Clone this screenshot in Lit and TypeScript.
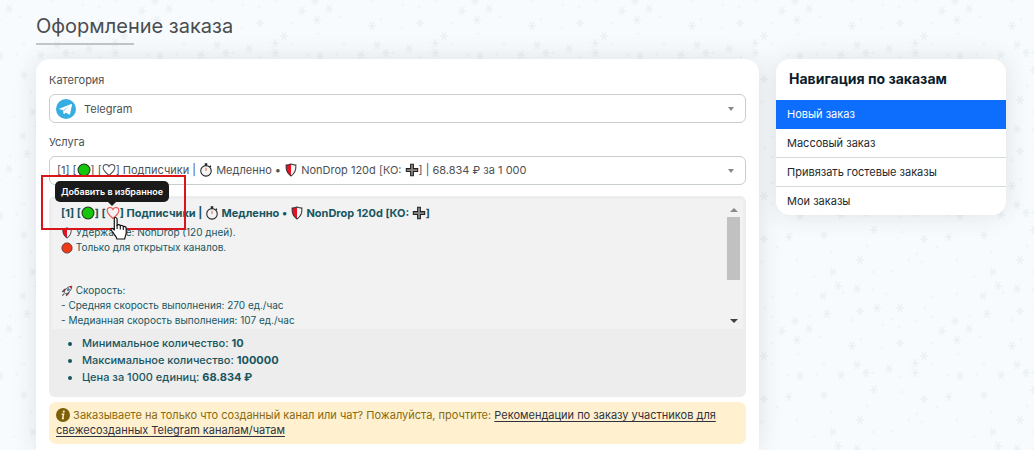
import { LitElement, html, css, svg } from "lit";
import { customElement, property, state } from "lit/decorators.js";

const BIG_FLAKES = [
  [29, 17], [64, 15], [114, 10], [4, 19], [100, 40], [73, 52], [78, 66], [63, 76], [97, 69],
  [67, 94], [100, 91], [117, 88], [140, 88], [35, 101], [22, 111], [49, 109], [37, 120],
  [92, 126], [140, 123], [4, 136], [97, 145], [129, 149], [106, 153], [155, 143],
  [155, 153], [40, 156], [81, 155],
];
const SMALL_FLAKES = [
  [142, 12], [107, 26], [17, 27], [71, 32], [37, 40], [149, 40], [157, 34], [2, 42], [113, 52],
  [132, 51], [54, 57], [113, 70], [126, 74], [37, 74], [83, 73], [13, 77], [92, 100], [123, 105],
  [139, 107], [132, 99], [157, 101], [12, 97], [50, 96], [60, 117], [101, 119], [122, 128],
  [12, 123], [38, 134], [12, 144], [64, 144], [28, 155], [57, 154], [113, 153], [141, 157], [5, 88],
];

@customElement("snow-backdrop")
export class SnowBackdrop extends LitElement {
  static styles = css`
    :host { display: block; }
    .sky { display: block; width: 100%; height: 100%; }
  `;
  render() {
    return html`<svg class="sky" aria-hidden="true">
      <defs>
        <pattern id="snow" x="120" y="60" width="160" height="160" patternUnits="userSpaceOnUse">
          ${BIG_FLAKES.map(
            ([x, y]) => svg`<path d="M${x - 4} ${y}h8M${x - 2} ${y - 4}l4 8M${x + 2} ${y - 4}l-4 8" stroke="#ebf2f6" stroke-width="1.5" fill="none"/>`
          )}
          ${SMALL_FLAKES.map(
            ([x, y]) => svg`<circle cx=${x} cy=${y} r="1.6" fill="#eff5f8"/>`
          )}
        </pattern>
      </defs>
      <rect width="100%" height="100%" fill="#f8fbfd" />
      <rect width="100%" height="100%" fill="url(#snow)" />
    </svg>`;
  }
}

const GLYPHS: Record<string, unknown> = {
  green: svg`<circle cx="8" cy="8" r="6.8" fill="#16c60c" stroke="#1d3a1b" stroke-width="1.2"/>`,
  red: svg`<circle cx="8" cy="8" r="6.8" fill="#f03a17" stroke="#5b3a35" stroke-width="1.2"/>`,
  heart: svg`<path d="M8 14.2C5.200 11.800 1.300 8.900 1.300 5.500c0-2.200 1.500-3.700 3.400-3.700C6.200 1.800 7.400 2.700 8 4c.6-1.300 1.800-2.200 3.300-2.200 1.900 0 3.400 1.500 3.400 3.700 0 3.400-3.900 6.300-6.700 8.700z" fill="none" stroke="currentColor" stroke-width="1.200"/>`,
  watch: svg`<path d="M6.500 1.200h3M8 1.200v2M12.300 3.200l1.200 1.200" stroke="#222" stroke-width="1.800"/><circle cx="8" cy="9" r="6" fill="#f4f4f4" stroke="#222" stroke-width="1.200"/><path d="M8 9V5.500" stroke="#d8453a" stroke-width="1"/>`,
  shield: svg`<path d="M8 1.200c2 .9 3.800 1.200 5.600 1.200.3 5.600-1.400 9.800-5.600 12.400C3.800 12.200 2.100 8 2.400 2.400 4.200 2.400 6 2.100 8 1.200z" fill="#f5f5f5"/><path d="M8 1.200v13.600C3.800 12.200 2.100 8 2.400 2.400 4.200 2.400 6 2.100 8 1.200z" fill="#e81224"/><path d="M8 1.200c2 .9 3.800 1.200 5.600 1.200.3 5.600-1.400 9.800-5.600 12.400C3.800 12.200 2.100 8 2.400 2.400 4.200 2.400 6 2.100 8 1.200z" fill="none" stroke="#333" stroke-width="1.200"/>`,
  plus: svg`<path d="M6.400 1.500h3.200v4.900h4.900v3.200H9.600v4.900H6.400V9.600H1.500V6.400h4.900z" fill="#8a8a8a" stroke="#222" stroke-width="1.200"/>`,
  rocket: svg`<path d="M4 8.500L1.500 9l2.700-3.300L7 5.300zM7.600 12L7 14.500l3.300-2.700.4-2.800z" fill="#e81224" stroke="#333" stroke-width=".8"/><path d="M4 9.500C5.500 5.500 9 1.800 14.500 1.500 14.200 7 10.500 10.500 6.500 12z" fill="#e9eef0" stroke="#333" stroke-width="1"/><path d="M11 2.300c1-.5 2.200-.8 3.500-.8 0 1.300-.3 2.500-.8 3.500z" fill="#e81224"/><circle cx="9.800" cy="6.200" r="1.400" fill="#3a96dd" stroke="#333" stroke-width=".7"/><path d="M4.500 11.500L1.800 14.200" stroke="#555" stroke-width="1.500"/>`,
};

@customElement("inline-glyph")
export class InlineGlyph extends LitElement {
  @property() name = "";
  static styles = css`
    :host { display: inline-block; width: 14px; height: 14px; vertical-align: -3px; }
    .glyph { display: block; width: 100%; height: 100%; }
  `;
  render() {
    return html`<svg class="glyph" viewBox="0 0 16 16" aria-hidden="true">${GLYPHS[this.name]}</svg>`;
  }
}

@customElement("order-nav")
export class OrderNav extends LitElement {
  @state() private active = 0;
  private items = ["Новый заказ", "Массовый заказ", "Привязать гостевые заказы", "Мои заказы"];
  static styles = css`
    :host { display: block; background: #fff; border-radius: 14px; overflow: hidden; box-shadow: 0 0 24px rgba(40, 50, 60, 0.12); }
    .title { margin: 0; padding: 10px 13px 11px; font-size: 14px; line-height: 20px; font-weight: 700; color: #0b1c2c; }
    .link { display: block; padding: 0 11px; font-size: 11px; line-height: 28px; border-bottom: 1px solid #d5dadd; color: #23292e; text-decoration: none; }
    .link:last-child { border-bottom: 0; }
    .active { background: #0d6efd; border-color: #0d6efd; color: #fff; }
  `;
  render() {
    return html`<h2 class="title">Навигация по заказам</h2>
      <nav>
        ${this.items.map(
          (t, i) => html`<a class="link ${i === this.active ? "active" : ""}" href="#" @click=${(e: Event) => { e.preventDefault(); this.active = i; }}>${t}</a>`
        )}
      </nav>`;
  }
}

@customElement("app-root")
export class AppRoot extends LitElement {
  static styles = css`
    :host { display: block; position: relative; min-height: 100vh; box-sizing: border-box; overflow: hidden; font-family: Inter, "Noto Sans", sans-serif; font-size: 11px; color: #4d5154; }
    * { box-sizing: border-box; }
    .backdrop { position: absolute; inset: 0; }
    .page { position: relative; display: flex; flex-direction: column; min-height: 100vh; padding: 14px 28px 0 36px; }
    .heading { margin: 0; font-size: 20px; line-height: 24px; font-weight: 400; color: #4a4d50; }
    .rule { width: 98px; height: 2px; margin: 5px 0 14px; background: #c3c7ca; }
    .columns { flex: 1; display: grid; grid-template-columns: minmax(0, 1fr) 230px; gap: 17px; }
    .side { align-self: start; }
    .card { padding: 13px 13px 6px; background: #fff; border-radius: 14px 14px 0 0; box-shadow: 0 0 24px rgba(40, 50, 60, 0.12); }
    .label { display: block; line-height: 16px; margin-bottom: 6px; }
    .field { position: relative; margin-bottom: 11px; }
    .select { display: block; width: 100%; height: 29px; padding: 0 34px; border: 1px solid #c8cdd0; border-radius: 6px; background: #fff; appearance: none; font: inherit; color: inherit; }
    .field::after { content: ""; position: absolute; right: 12px; top: 13px; border: 3px solid transparent; border-top: 4px solid #888; border-bottom: 0; }
    .quiet { color: transparent; }
    .quiet option { color: #4d5154; }
    .logo { position: absolute; left: 7px; top: 5px; width: 20px; height: 20px; pointer-events: none; }
    .value { position: absolute; left: 8px; right: 30px; top: 0; line-height: 29px; white-space: nowrap; overflow: hidden; pointer-events: none; }
    .details { padding: 3px 3px 11px; background: #ededed; border-radius: 6px; color: #17565f; }
    .scroller { display: flex; height: 130px; background: #f2f2f2; }
    .text { flex: 1; min-width: 0; overflow: hidden; padding: 4px 9px 0; font-size: 10px; line-height: 15px; }
    .service { margin: 0 0 2px; font-size: 11px; line-height: 20px; font-weight: 700; white-space: nowrap; }
    .lines { margin: 0 0 28px; }
    .small { width: 12px; height: 12px; }
    .heart { display: inline-block; padding: 0; border: 0; background: none; font: inherit; color: #ef4b42; vertical-align: baseline; }
    .anchor { position: relative; }
    .tip { position: absolute; z-index: 2; left: 6px; top: -15px; width: 114px; line-height: 21px; background: #1a1a1a; border-radius: 5px; color: #fff; font-size: 9px; font-weight: 600; text-align: center; white-space: nowrap; }
    .tip::after { content: ""; position: absolute; left: 53px; top: 21px; border: 4px solid transparent; border-top-color: #1a1a1a; border-bottom: 0; }
    .frame { position: absolute; z-index: 3; left: -8px; top: -21px; width: 145px; height: 55px; border: 2px solid #d8151b; pointer-events: none; }
    .pointer { position: absolute; z-index: 4; left: 61px; top: 20px; width: 18px; height: 24px; pointer-events: none; }
    .bar { display: flex; flex-direction: column; align-items: center; width: 13px; margin-right: 3px; padding: 9px 0 6px; }
    .up { border: 4px solid transparent; border-bottom-color: #8a8a8a; border-top: 0; }
    .down { margin-top: auto; border: 4px solid transparent; border-top-color: #404040; border-bottom: 0; }
    .thumb { width: 13px; height: 63px; margin-top: 5px; background: #c1c1c1; }
    .facts { margin: 6px 0 0; padding: 0 0 0 30px; line-height: 17px; font-weight: 500; }
    .notice { margin: 5px 0 0; padding: 6px 7px; background: #fff1cf; border-radius: 7px; color: #8a6a10; line-height: 15px; }
    .info { display: inline-block; width: 14px; height: 14px; vertical-align: -3px; }
    .doc { color: #2f3140; text-underline-offset: 2px; }
  `;

  render() {
    const g = (name: string) => html`<inline-glyph name=${name}></inline-glyph>`;
    const sm = (name: string) => html`<inline-glyph class="small" name=${name}></inline-glyph>`;
    return html`
      <snow-backdrop class="backdrop"></snow-backdrop>
      <main class="page">
        <h1 class="heading">Оформление заказа</h1>
        <div class="rule"></div>
        <div class="columns">
          <section class="card">
            <label class="label" for="category">Категория</label>
            <div class="field">
              <select class="select" id="category"><option>Telegram</option></select>
              <svg class="logo" viewBox="0 0 20 20" aria-hidden="true">
                <circle cx="10" cy="10" r="10" fill="#37aee2" />
                <path d="M3.300 9.800L15.200 5.100c.6-.2 1 .1.8.9l-2 9.100c-.1.7-.6.8-1.100.5l-3-2.200-1.600 1.500c-.3.3-.6.2-.7-.2L6.700 11 3.500 10.300c-.5-.1-.6-.3-.2-.5z" fill="#fff" />
                <path d="M6.700 11l6.800-4.300-5.300 5.200-.4 2.700z" fill="#b9dcee" />
              </svg>
            </div>
            <label class="label" for="service">Услуга</label>
            <div class="field">
              <select class="select quiet" id="service"><option>[1] Подписчики</option></select>
              <span class="value" aria-hidden="true">[1] [${g("green")}] [${g("heart")}] Подписчики | ${g("watch")} Медленно • ${g("shield")} NonDrop 120d [КО: ${g("plus")}] | 68.834 ₽ за 1 000</span>
            </div>
            <div class="anchor">
              <div class="details">
                <div class="scroller">
                  <div class="text">
                    <p class="service">[1] [${g("green")}] [<button class="heart" type="button" aria-label="Добавить в избранное" aria-describedby="tip">${g("heart")}</button>] Подписчики | ${g("watch")} Медленно • ${g("shield")} NonDrop 120d [КО: ${g("plus")}]</p>
                    <p class="lines">${sm("shield")} Удержание: NonDrop (120 дней).<br />${sm("red")} Только для открытых каналов.</p>
                    <p class="lines">${sm("rocket")} Скорость:<br />- Средняя скорость выполнения: 270 ед./час<br />- Медианная скорость выполнения: 107 ед./час</p>
                  </div>
                  <div class="bar" aria-hidden="true"><i class="up"></i><i class="thumb"></i><i class="down"></i></div>
                </div>
                <ul class="facts">
                  <li>Минимальное количество: <b>10</b></li>
                  <li>Максимальное количество: <b>100000</b></li>
                  <li>Цена за 1000 единиц: <b>68.834 ₽</b></li>
                </ul>
              </div>
              <div class="frame"></div>
              <svg class="pointer" viewBox="0 0 18 24" aria-hidden="true">
                <path d="M5.500 1c1.200 0 1.900.8 1.900 2v6c.3-1.200 3-1.200 3.200.5.500-.9 2.800-.7 3 .8.700-.7 2.900-.4 2.900 1.500v4.700c0 2-1.300 3.200-1.500 6H7.200c-.2-2-1.800-3.200-3.100-5.500-.8-1.500-3.400-3.300-2.700-4.500.7-1.100 2.300-.3 3.200 1V3c0-1.200.3-2 .9-2z" transform="translate(-.3 .5)" fill="#fff" stroke="#111" stroke-width="1.200" stroke-linejoin="round" />
                <path d="M7.100 9v4M10.300 10v3.500M13.300 11v3" stroke="#111" stroke-width="1.100" />
              </svg>
              <div class="tip" id="tip" role="tooltip">Добавить в избранное</div>
            </div>
            <p class="notice"><svg class="info" viewBox="0 0 14 14" aria-hidden="true"><circle cx="7" cy="7" r="7" fill="#7d5f08" /><circle cx="7.800" cy="3.600" r="1.100" fill="#fff1cf" /><path d="M5.600 6.200h2L6.600 10.500h1.300" fill="none" stroke="#fff1cf" stroke-width="1.400" /></svg> Заказываете на только что созданный канал или чат? Пожалуйста, прочтите: <a class="doc" href="#">Рекомендации по заказу участников для свежесозданных Telegram каналам/чатам</a></p>
          </section>
          <order-nav class="side"></order-nav>
        </div>
      </main>
    `;
  }
}
